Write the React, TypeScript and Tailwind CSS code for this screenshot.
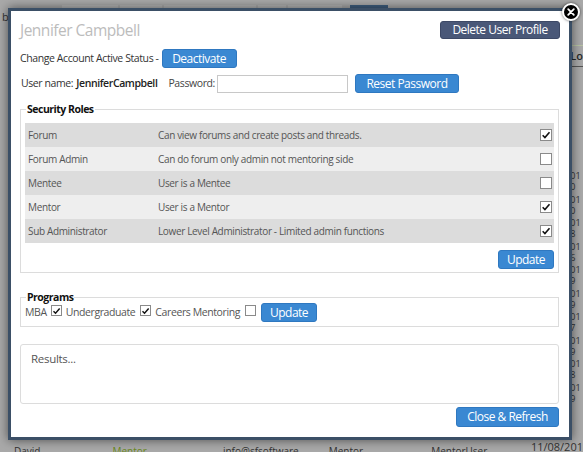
import React from 'react';

const roles = [
  ['Forum', 'Can view forums and create posts and threads.', true],
  ['Forum Admin', 'Can do forum only admin not mentoring side', false],
  ['Mentee', 'User is a Mentee', false],
  ['Mentor', 'User is a Mentor', true],
  ['Sub Administrator', 'Lower Level Administrator - Limited admin functions', true],
] as const;

const sideDates = ['0', '0', '8', '6', '9', '9', '7', '9', '8', '9'];

const blueBtn =
  'h-[19px] rounded-[3px] bg-[#3a88d2] border border-[#2f78c0] text-white text-[12px] tracking-[-0.5px] leading-none flex items-center justify-center';

function Box({ checked, size = 'w-[11px] h-[11px]' }: { checked: boolean; size?: string }) {
  return (
    <span className={`inline-flex ${size} shrink-0 items-center justify-center border border-[#8a8a8a] bg-white`}>
      {checked && (
        <svg viewBox="0 0 12 12" className="w-[10px] h-[10px]">
          <path d="M2 6.3 L4.7 9 L10.2 2.6" stroke="#111" strokeWidth="1.9" fill="none" />
        </svg>
      )}
    </span>
  );
}

export default function App() {
  return (
    <div className="relative w-[583px] h-[452px] overflow-hidden bg-[#a9a9a9] font-['Open_Sans',sans-serif]">
      {/* page behind the dialog */}
      <div className="flex flex-col h-full">
        <div className="flex h-[8px] items-end gap-[2px] pl-[62px]">
          <div className="w-[56px] h-[3px] bg-[#b4b4b4]" />
          <div className="w-[42px] h-[3px] bg-[#b4b4b4]" />
          <div className="w-[92px] h-[3px] bg-[#b4b4b4]" />
          <div className="w-[28px] h-[3px] bg-[#b4b4b4]" />
          <div className="w-[54px] h-[3px] bg-[#b4b4b4]" />
          <div className="ml-[6px] w-[38px] h-[3px] bg-[#3f5f80]" />
        </div>
        <div className="flex flex-1">
          <div className="w-[8px] text-[11px] leading-none text-[#333] pt-[3px] pl-[2px]">b</div>
          <div className="w-[564px]" />
          <div className="flex-1 pl-[1px] text-[9px] text-[#333]">
            <div className="mt-[37px] h-[1px] bg-[#b8c4a4]" />
            <div className="mt-[4px] text-[11px] leading-[12px] font-semibold text-[#2a2a2a]">Lo</div>
            <div className="mt-[4px] h-[1px] bg-[#555]" />
            <div className="mt-[103px] flex flex-col">
              {sideDates.map((d, i) => (
                <div key={i} className="h-[23.5px] flex flex-col">
                  <span className="leading-[11px]">01</span>
                  <span className="leading-[11px]">{d}</span>
                </div>
              ))}
            </div>
          </div>
        </div>
        <div className="relative h-[12px] flex text-[10px] leading-none text-[#333]">
          <span className="absolute right-0 top-[1px] text-[11px]">11/08/201</span>
          <span className="ml-[14px] mt-[6px]">David</span>
          <span className="ml-[72px] mt-[6px] text-[#6b8a1e]">Mentor</span>
          <span className="ml-[76px] mt-[6px]">info@sfsoftware</span>
          <span className="ml-[30px] mt-[6px]">Mentor</span>
          <span className="ml-[68px] mt-[6px]">MentorUser</span>
        </div>
      </div>

      {/* dialog */}
      <div className="absolute left-[8px] top-[8px] w-[564px] h-[432px] border-[3px] border-[#3b4f66] bg-white shadow-[0_0_10px_rgba(0,0,0,0.55)]">
        <button className="absolute -right-[11px] -top-[8px] w-[18px] h-[18px] rounded-full bg-black border-2 border-white shadow-[0_0_3px_rgba(0,0,0,0.6)] flex items-center justify-center">
          <svg viewBox="0 0 10 10" className="w-[8px] h-[8px]">
            <path d="M1.5 1.5 L8.5 8.5 M8.5 1.5 L1.5 8.5" stroke="white" strokeWidth="2.2" strokeLinecap="round" />
          </svg>
        </button>

        <div className="pl-[9px] pr-[10px] pt-[10px] text-[#333]">
          {/* header */}
          <div className="flex items-center justify-between h-[18px]">
            <h1 className="text-[15.5px] tracking-[-0.5px] leading-[22px] text-[#bcbcbc]">Jennifer Campbell</h1>
            <button className="-mr-[1px] h-[18px] w-[120px] rounded-[3px] bg-[#4a5878] border border-[#3d4966] text-white text-[12px] tracking-[-0.5px] leading-none">
              Delete User Profile
            </button>
          </div>

          <div className="mt-[10px] flex items-center gap-[3px] text-[10.5px] tracking-[-0.4px]">
            <span>Change Account Active Status -</span>
            <button className={`${blueBtn} w-[75px]`}>Deactivate</button>
          </div>

          <div className="mt-[6px] flex items-center text-[10.5px] tracking-[-0.4px]">
            <span className="ml-[1px]">User name:</span>
            <span className="ml-[3px] font-semibold text-[#222]">JenniferCampbell</span>
            <span className="ml-[11px] text-[#444]">Password:</span>
            <input className="ml-[2px] w-[131px] h-[18px] border border-[#c8c8c8] bg-white" />
            <button className={`${blueBtn} ml-[7px] w-[104px]`}>Reset Password</button>
          </div>

          {/* security roles */}
          <fieldset className="mt-[10px] border border-[#dcdcdc] px-[4px] pb-[3px]">
            <legend className="ml-[1px] px-[1px] text-[10.5px] tracking-[-0.5px] leading-[12px] font-bold text-[#111]">Security Roles</legend>
            <div className="mt-[8px] flex flex-col text-[10px] tracking-[-0.35px] text-[#555]">
              {roles.map(([name, desc, on], i) => (
                <div
                  key={name}
                  className={`flex items-center h-[24px] pl-[3px] pr-[2px] ${i % 2 === 0 ? 'bg-[#dcdcdc]' : 'bg-[#eeeeee]'}`}
                >
                  <span className="w-[130px]">{name}</span>
                  <span className="flex-1">{desc}</span>
                  <Box checked={on} size="w-[12px] h-[12px]" />
                </div>
              ))}
            </div>
            <div className="mt-[7px] flex justify-end">
              <button className={`${blueBtn} w-[56px]`}>Update</button>
            </div>
          </fieldset>

          {/* programs */}
          <fieldset className="mt-[18px] border border-[#dcdcdc] px-[4px] pb-[4px]">
            <legend className="ml-[1px] px-[1px] text-[10.5px] tracking-[-0.5px] leading-[12px] font-bold text-[#111]">Programs</legend>
            <div className="flex items-center text-[10.5px] tracking-[-0.4px] text-[#555]">
              <span>MBA</span>
              <span className="ml-[4px]"><Box checked /></span>
              <span className="ml-[4px]">Undergraduate</span>
              <span className="ml-[5px]"><Box checked /></span>
              <span className="ml-[4px]">Careers Mentoring</span>
              <span className="ml-[5px]"><Box checked={false} /></span>
              <button className={`${blueBtn} ml-[5px] w-[56px]`}>Update</button>
            </div>
          </fieldset>

          {/* results */}
          <div className="mt-[17px] h-[60px] rounded-[3px] border border-[#dcdcdc] px-[10px] pt-[5px] text-[11.5px] tracking-[-0.3px] text-[#555]">
            Results...
          </div>

          <div className="mt-[3px] flex justify-end">
            <button className={`${blueBtn} h-[20px] w-[103px]`}>Close &amp; Refresh</button>
          </div>
        </div>
      </div>
    </div>
  );
}
